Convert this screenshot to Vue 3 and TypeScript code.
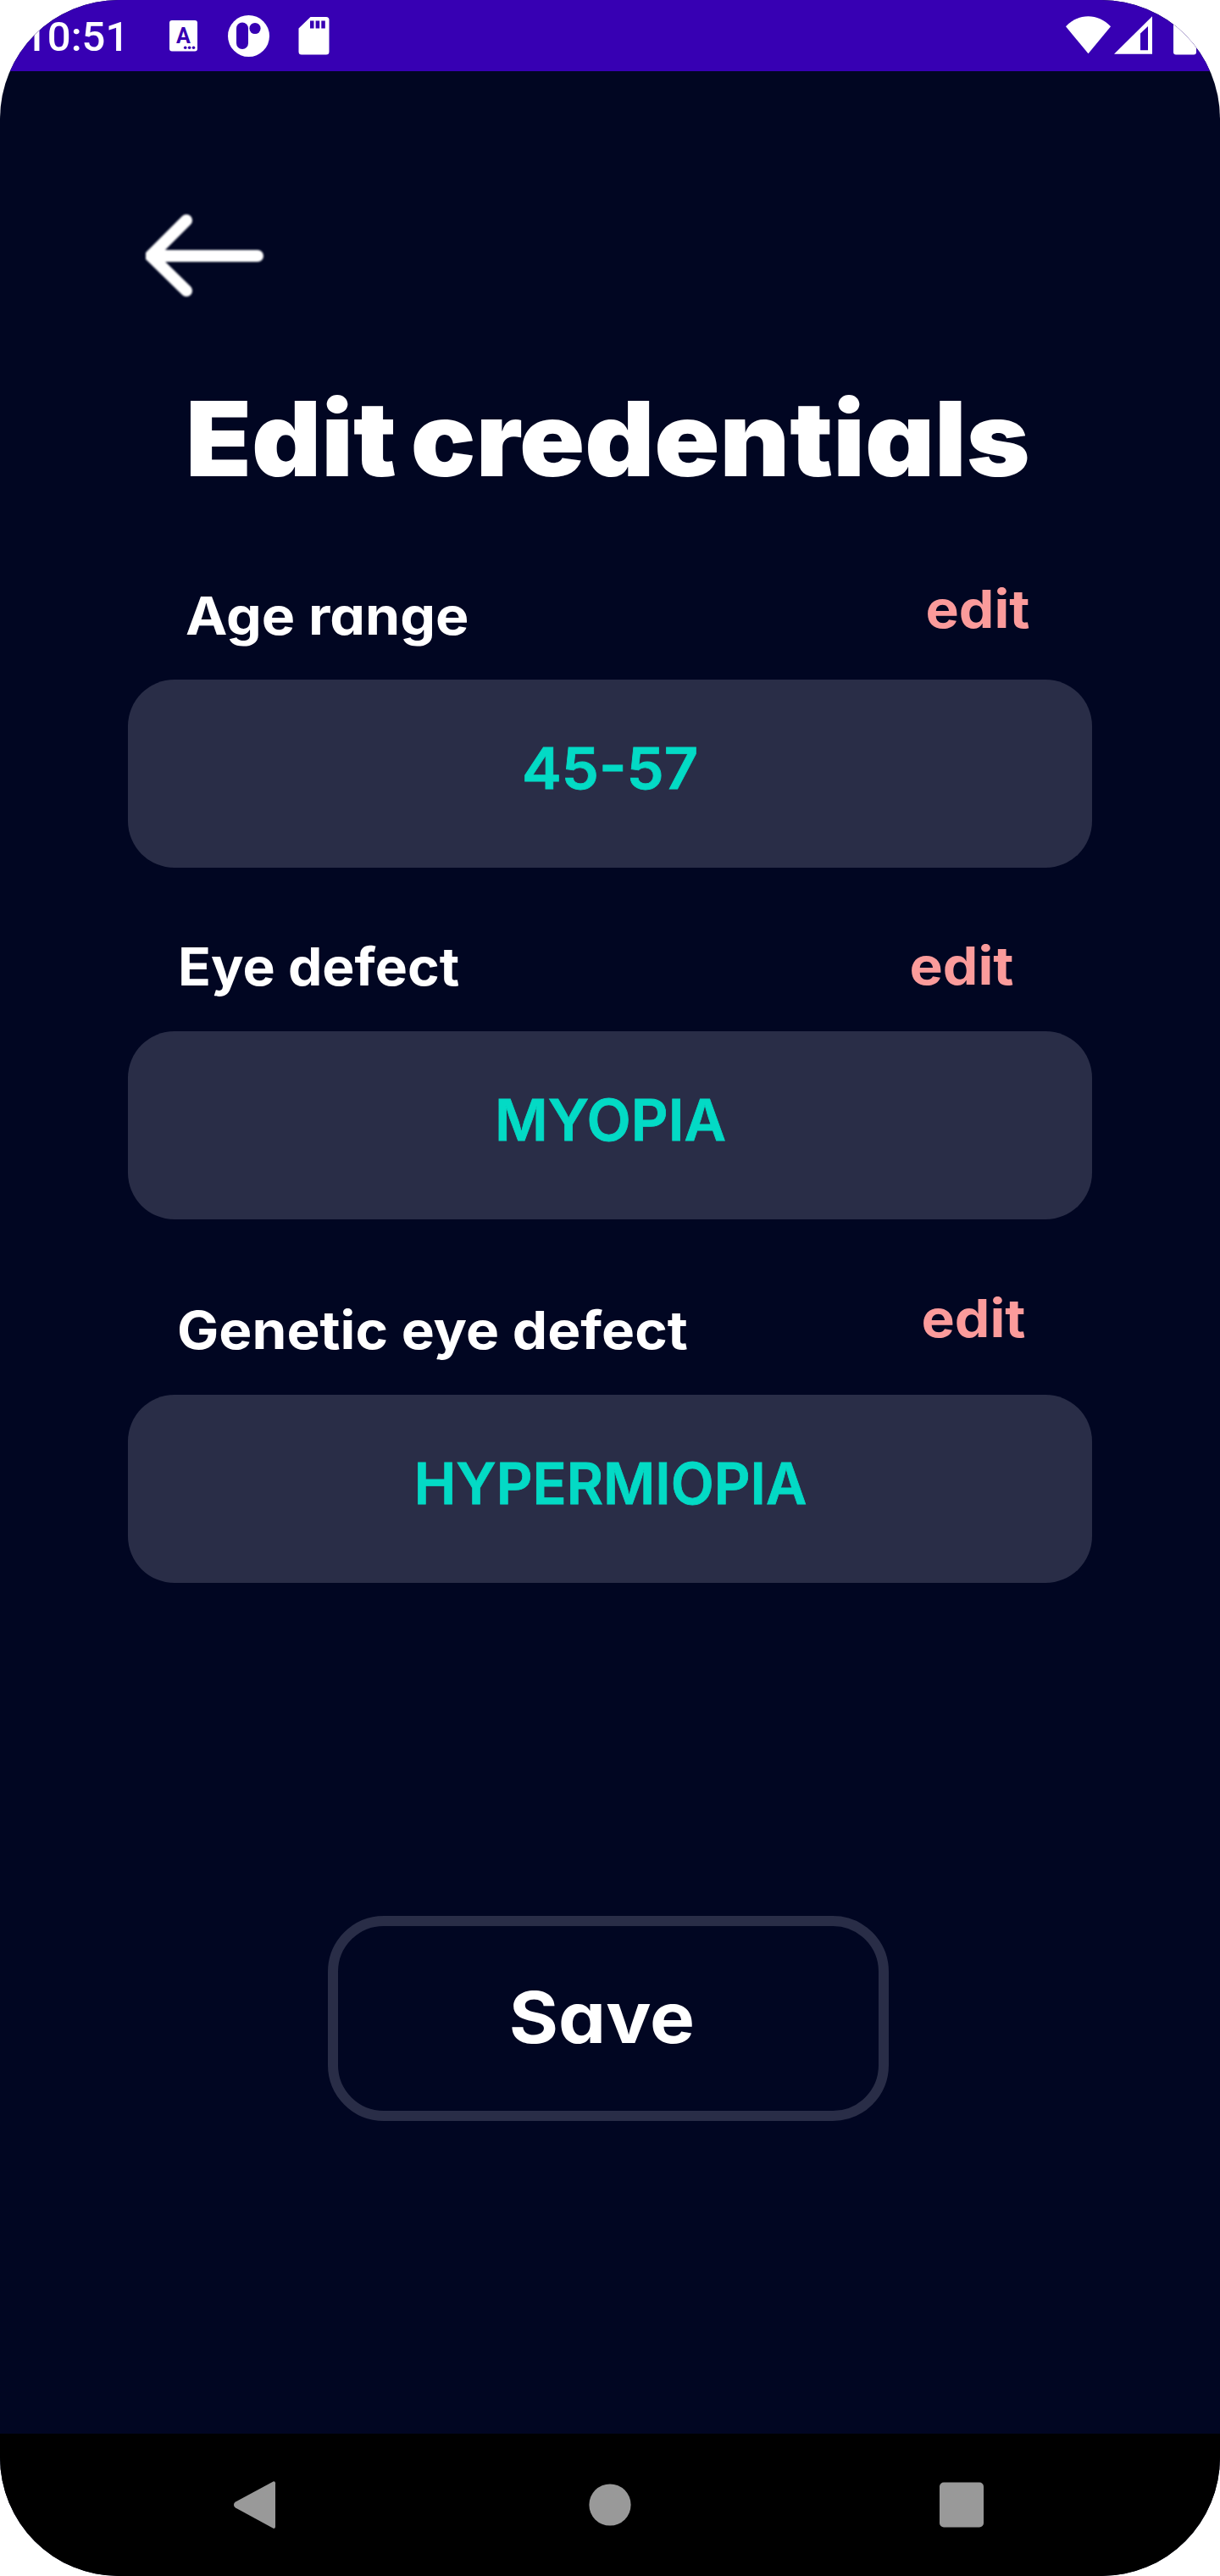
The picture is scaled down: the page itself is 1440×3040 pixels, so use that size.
<script setup lang="ts">
interface Field {
  id: string
  label: string
  value: string
}

const fields: Field[] = [
  { id: 'age', label: 'Age range', value: '45-57' },
  { id: 'eye', label: 'Eye defect', value: 'MYOPIA' },
  { id: 'genetic', label: 'Genetic eye defect', value: 'HYPERMIOPIA' },
]
</script>

<template>
  <div class="screen">
    <header class="status">
      <span class="clock">10:51</span>
      <svg class="notifications" width="190" height="84" viewBox="200 0 190 84">
        <rect x="200" y="24" width="33" height="36.5" rx="3" fill="#fff" />
        <text x="216.5" y="50.5" text-anchor="middle" class="glyph">A</text>
        <g fill="#3700b3">
          <circle cx="218.7" cy="56.2" r="1.8" />
          <circle cx="223.6" cy="56.2" r="1.8" />
          <circle cx="228.5" cy="56.2" r="1.8" />
        </g>
        <circle cx="293.5" cy="42.5" r="24.5" fill="#fff" />
        <rect x="279" y="26.5" width="14" height="31.5" rx="7" fill="#3700b3" />
        <circle cx="301" cy="33.5" r="6.6" fill="#3700b3" />
        <path d="M366.5 20H385a3.5 3.5 0 0 1 3.5 3.5V61a3.5 3.5 0 0 1-3.5 3.5H356a3.5 3.5 0 0 1-3.5-3.5V33.5Z" fill="#fff" />
        <path d="M366 24.5h4.5v9H366zM372.6 24.5h4.6v9h-4.6zM379.3 24.5h4.5v9h-4.5z" fill="#3700b3" />
      </svg>
      <svg class="system" width="156" height="84" viewBox="1257 0 156 84">
        <path d="M1284.5 63.3 1258 31.3C1273 15.2 1296 15.2 1311 31.3Z" fill="#fff" />
        <path fill-rule="evenodd" d="M1315 63.7 1360 19.3V63.7ZM1346 39.5V59.3H1355V31Z" fill="#fff" />
        <path d="M1385 20h27v41.5a3 3 0 0 1-3 3h-21a3 3 0 0 1-3-3Z" fill="#fff" />
      </svg>
    </header>

    <main class="content">
      <button class="back" aria-label="Back">
        <svg width="139" height="102" viewBox="0 0 139 102">
          <path d="M48 8 6 50 48 91M6 50H132" fill="none" stroke="#fff" stroke-width="14" stroke-linecap="round" stroke-linejoin="round" />
        </svg>
      </button>
      <h1 class="title">Edit credentials</h1>

      <section v-for="f in fields" :key="f.id" class="field" :class="f.id">
        <div class="row">
          <span class="label">{{ f.label }}</span>
          <a class="edit">edit</a>
        </div>
        <div class="value"><span>{{ f.value }}</span></div>
      </section>

      <button class="save"><span>Save</span></button>
    </main>

    <footer class="nav">
      <svg width="1440" height="168" viewBox="0 0 1440 168" fill="#999">
        <path d="M323 56.3a2 2 0 0 1 2 2V110a2 2 0 0 1-2 2L278 87.5a4 4 0 0 1 0-7Z" />
        <circle cx="720" cy="84" r="24.6" />
        <rect x="1109" y="57.5" width="52" height="53" rx="5" />
      </svg>
    </footer>
  </div>
</template>

<style>
body {
  background: #fff;
}
</style>

<style scoped>
.screen {
  width: 1440px;
  height: 3040px;
  display: flex;
  flex-direction: column;
  overflow: hidden;
  border-radius: 140px;
  background: #010622;
  color: #fff;
  font-family: Inter, "Liberation Sans", sans-serif;
  font-feature-settings: "cv11";
}
.status {
  flex: none;
  display: flex;
  height: 84px;
  background: #3700b3;
}
.clock {
  width: 124px;
  margin-left: 28px;
  font: 500 49px/88px Roboto, sans-serif;
  white-space: nowrap;
}
.notifications {
  margin-left: 48px;
}
.system {
  margin-left: auto;
  margin-right: 27px;
}
.glyph {
  font: 700 25px Roboto, sans-serif;
  fill: #3700b3;
}
.content {
  flex: 1;
  min-height: 0;
  padding: 0 151px;
}
button {
  padding: 0;
  border: 0;
  background: none;
  color: inherit;
  font: inherit;
}
.back {
  display: block;
  margin: 168px 0 0 21px;
  height: 102px;
}
.back svg {
  display: block;
  filter: blur(0.8px);
}
.title {
  width: max-content;
  margin: 89px 0 0 68px;
  font-size: 122px;
  line-height: 150px;
  font-weight: 900;
  white-space: nowrap;
  word-spacing: -8px;
  transform: scaleX(1.044);
  transform-origin: left;
}
.row {
  display: flex;
  justify-content: space-between;
  font-size: 62px;
  line-height: 80px;
  font-weight: 650;
}
.label {
  transform-origin: left;
}
.edit {
  color: #fb9b9b;
  transform: scaleX(1.065);
  transform-origin: right;
}
.value {
  height: 222px;
  padding-left: 1px;
  box-sizing: border-box;
  border-radius: 55px;
  background: #292d47;
  text-align: center;
  color: #03dac5;
  font-size: 67.5px;
  font-weight: 600;
  -webkit-text-stroke: 0.8px #03dac5;
  line-height: 209px;
}
.value span {
  display: inline-block;
}
.age .row {
  height: 123px;
  margin: 86px 73px 0 68px;
}
.age .label {
  margin-top: 8px;
  transform: scaleX(1.068);
}
.age .value span {
  transform: scaleX(1.04);
}
.eye .row {
  height: 117px;
  margin: 76px 92px 0 59px;
}
.eye .label {
  margin-top: 1px;
  transform: scaleX(1.035);
}
.eye .value span {
  transform: scaleX(1.008);
}
.genetic .row {
  height: 130px;
  margin: 77px 78px 0 58px;
}
.genetic .label {
  margin-top: 14px;
  transform: scaleX(1.06);
}
.genetic .value span {
  transform: scaleX(0.984);
}
.save {
  display: block;
  width: 662px;
  height: 242px;
  margin: 393px 0 0 236px;
  padding: 0 16px 3px 0;
  border: 12px solid #292d47;
  border-radius: 66px;
  font-size: 84px;
  font-weight: 650;
}
.save span {
  display: inline-block;
  transform: scaleX(1.06);
}
.nav {
  height: 168px;
  flex: none;
  background: #000;
}
.nav svg {
  display: block;
}
</style>
